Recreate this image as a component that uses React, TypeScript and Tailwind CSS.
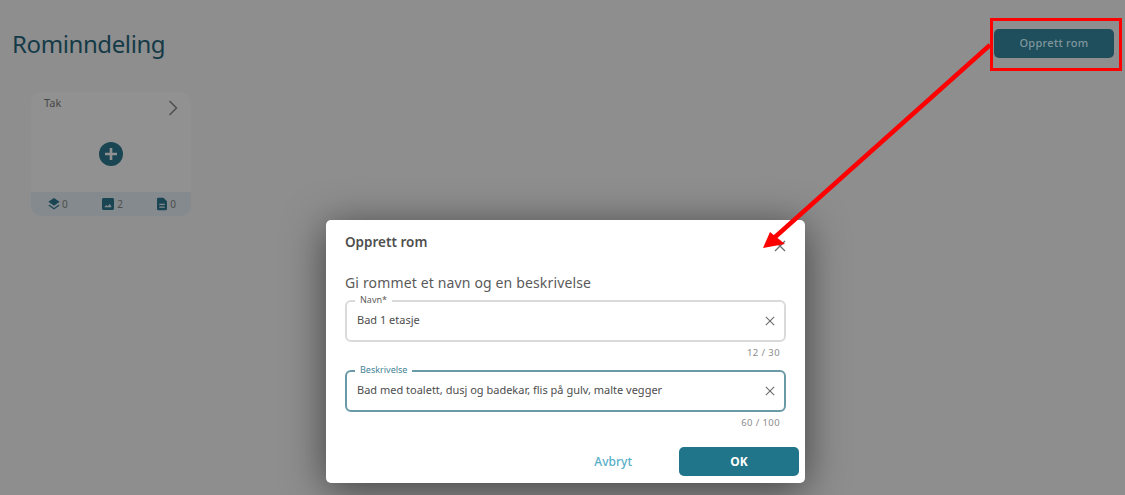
import React from 'react'

const font = { fontFamily: '"Noto Sans", sans-serif' }

function CloseIcon({ size = 12 }: { size?: number }) {
  return (
    <svg width={size} height={size} viewBox="0 0 12 12" fill="none" stroke="#6b6b6b" strokeWidth="1.3">
      <path d="M1 1 L11 11 M11 1 L1 11" />
    </svg>
  )
}

function StatItem({ count, gap, children }: { count: number; gap: string; children: React.ReactNode }) {
  return (
    <div className={`flex items-center ${gap}`}>
      {children}
      <span className="text-[10px] text-[#4e4e4e]">{count}</span>
    </div>
  )
}

function RoomCard() {
  return (
    <div className="ml-[31px] mt-[34px] flex h-[124px] w-[160px] flex-col overflow-hidden rounded-[10px] bg-[#919191]">
      <div className="relative flex-1">
        <div className="pl-[13px] pt-[3px] text-[11px] text-[#474747]">Tak</div>
        <svg className="absolute right-[13px] top-[8px]" width="10" height="16" viewBox="0 0 10 16" fill="none" stroke="#4f4f4f" strokeWidth="1.5">
          <path d="M1.5 1 L8.5 8 L1.5 15" />
        </svg>
        <div className="flex justify-center pt-[30px] pr-[1px]">
          <svg width="24" height="24" viewBox="0 0 24 24">
            <circle cx="12" cy="12" r="12" fill="#1a4653" />
            <path d="M12 6 V18 M6 12 H18" stroke="#919191" strokeWidth="2.6" />
          </svg>
        </div>
      </div>
      <div className="flex h-[24px] items-center justify-between bg-[#848a8d] pl-[17px] pr-[15px]">
        <StatItem count={0} gap="gap-[2px]">
          <svg width="12" height="14" viewBox="0 0 14 15" fill="#1a4653">
            <path d="M7 0.5 L13.5 5 L7 9.5 L0.5 5 Z" />
            <path d="M1.7 8.4 L0.5 9.3 L7 14 L13.5 9.3 L12.3 8.4 L7 12.2 Z" />
          </svg>
        </StatItem>
        <StatItem count={2} gap="gap-[3px]">
          <svg width="12" height="12" viewBox="0 0 13 13">
            <rect width="13" height="13" rx="1.5" fill="#1a4653" />
            <path d="M2.5 10 L4.5 7.5 L6 9 L8.5 6.5 L10.5 10 Z" fill="#848a8d" />
          </svg>
        </StatItem>
        <StatItem count={0} gap="gap-[3px]">
          <svg width="10" height="14" viewBox="0 0 11 14">
            <path d="M1.5 0 H7 L11 4 V12.5 A1.5 1.5 0 0 1 9.5 14 H1.5 A1.5 1.5 0 0 1 0 12.5 V1.5 A1.5 1.5 0 0 1 1.5 0 Z" fill="#1a4653" />
            <path d="M2.5 7.5 H8.5 M2.5 10.5 H8.5" stroke="#848a8d" strokeWidth="1.3" />
          </svg>
        </StatItem>
      </div>
    </div>
  )
}

function Field({ label, value, count, focused }: { label: string; value: string; count: string; focused?: boolean }) {
  return (
    <div>
      <div
        className={`relative flex h-[42px] items-center justify-between rounded-[6px] border-2 bg-white pb-[1px] pl-[10px] pr-[9px] ${
          focused ? 'border-[#6a9aa7]' : 'border-[#dadada]'
        }`}
      >
        <span
          className={`absolute left-[8px] top-[-8px] bg-white px-[5px] text-[9px] leading-[12px] ${
            focused ? 'text-[#3f8496]' : 'text-[#5c5c5c]'
          }`}
        >
          {label}
        </span>
        <span className="text-[11px] text-[#4d4d4d]">{value}</span>
        <CloseIcon size={10} />
      </div>
      <div className="pr-[6px] pt-[4px] text-right text-[9.5px] leading-[13px] tracking-[0.4px] text-[#8c8c8c]">{count}</div>
    </div>
  )
}

function Modal() {
  return (
    <div className="absolute left-[326px] top-[220px] h-[263px] w-[479px] rounded-[5px] bg-white px-[19px] pt-[12px] shadow-[0_6px_40px_rgba(0,0,0,0.55)]">
      <div className="flex items-center justify-between">
        <h2 className="text-[13.5px] font-semibold leading-[19px] text-[#4f4f4f]">Opprett rom</h2>
        <div className="pt-[8px]">
          <CloseIcon />
        </div>
      </div>
      <p className="mt-[21px] text-[14px] leading-[19px] tracking-[0.15px] text-[#5a5a5a]">Gi rommet et navn og en beskrivelse</p>
      <div className="mt-[8px] flex flex-col gap-[11px]">
        <Field label="Navn*" value="Bad 1 etasje" count="12 / 30" />
        <Field label="Beskrivelse" value="Bad med toalett, dusj og badekar, flis på gulv, malte vegger" count="60 / 100" focused />
      </div>
      <div className="absolute bottom-[7px] right-[6px] flex items-center gap-[47px]">
        <button className="text-[12px] font-medium text-[#55aec8]">Avbryt</button>
        <button className="h-[29px] w-[120px] rounded-[5px] bg-[#20758a] text-[12px] font-bold text-white">OK</button>
      </div>
    </div>
  )
}

export default function App() {
  return (
    <div className="relative h-[495px] w-[1125px] overflow-hidden bg-[#8e8e8e]" style={font}>
      <header className="flex items-start justify-between pl-[12px] pr-[11px] pt-[29px]">
        <h1 className="text-[24px] leading-[29px] tracking-[-0.4px] text-[#153a47]">Rominndeling</h1>
        <button className="h-[29px] w-[120px] rounded-[5px] bg-[#1f4e5c] text-[11px] font-medium tracking-[0.3px] text-[#80979e]">Opprett rom</button>
      </header>
      <RoomCard />
      <Modal />
      {/* annotation */}
      <div className="absolute left-[990px] top-[18px] h-[53px] w-[132px] border-[3px] border-[#fe0000]" />
      <svg className="absolute left-[760px] top-[40px]" width="235" height="215" viewBox="0 0 235 215" fill="none">
        <path d="M230 5 L14 198" stroke="#fe0000" strokeWidth="4.5" />
        <path d="M3 208 L10 192 L25 204 Z" fill="#fe0000" />
      </svg>
    </div>
  )
}
